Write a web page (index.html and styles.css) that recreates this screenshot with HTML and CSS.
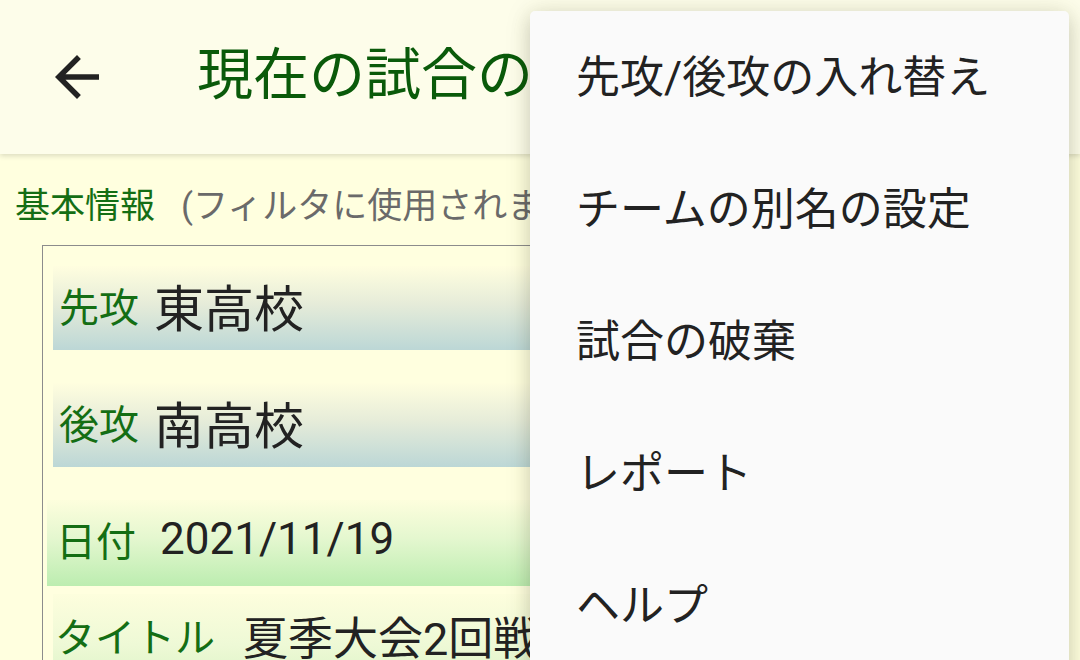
FILE: index.html
```html
<!DOCTYPE html>
<html lang="ja">
<head>
<meta charset="utf-8">
<title>現在の試合の情報</title>
<link rel="stylesheet" href="styles.css">
</head>
<body>
<div class="screen">
  <header class="toolbar">
    <button class="back" aria-label="戻る">
      <svg viewBox="0 0 24 24" width="66" height="66"><path d="M20 11H7.83l5.59-5.59L12 4l-8 8 8 8 1.41-1.41L7.83 13H20v-2z" fill="#222"/></svg>
    </button>
    <h1 class="title">現在の試合の情報</h1>
  </header>
  <main class="content">
    <div class="section-head"><span class="section-title">基本情報</span><span class="section-note">(フィルタに使用されます)</span></div>
    <div class="box">
      <div class="row team first"><span class="label">先攻</span><span class="team-name">東高校</span></div>
      <div class="row team second"><span class="label">後攻</span><span class="team-name">南高校</span></div>
      <div class="row date"><span class="label">日付</span><span class="value">2021/11/19</span></div>
      <div class="row plain"><span class="label">タイトル</span><span class="value cjk">夏季大会2回戦</span></div>
    </div>
  </main>
  <ul class="menu">
    <li>先攻/後攻の入れ替え</li>
    <li>チームの別名の設定</li>
    <li>試合の破棄</li>
    <li>レポート</li>
    <li>ヘルプ</li>
  </ul>
</div>
</body>
</html>
```
FILE: styles.css
```css
html, body {
  margin: 0;
  padding: 0;
}
body {
  width: 1080px;
  height: 660px;
  overflow: hidden;
  background: #ffffdf;
  font-family: Roboto, "Noto Sans CJK JP", sans-serif;
  color: #222;
}
.screen {
  position: relative;
  width: 1080px;
  height: 660px;
  overflow: hidden;
  display: flex;
  flex-direction: column;
}
.toolbar {
  height: 154px;
  flex: none;
  background: #fdfdea;
  display: flex;
  align-items: center;
  box-shadow: 0 2px 5px rgba(0,0,0,0.14);
  position: relative;
  z-index: 1;
}
.back {
  width: 66px;
  height: 66px;
  margin-left: 44px;
  padding: 0;
  border: 0;
  background: none;
  display: flex;
}
.title {
  margin: 0 0 4px 87px;
  font-size: 56px;
  font-weight: 400;
  color: #0a5a0a;
  white-space: nowrap;
  line-height: 1;
}
.content {
  flex: 1;
  padding: 29px 0 0 15px;
}
.section-head {
  font-size: 35px;
  line-height: 48px;
  white-space: nowrap;
}
.section-title {
  color: #146e14;
}
.section-note {
  color: #6a6a6a;
  margin-left: 26px;
}
.box {
  margin: 14px 0 0 27px;
  width: 1000px;
  height: 600px;
  border: 1px solid #8c8c8c;
  border-right: 0;
  border-bottom: 0;
  display: flex;
  flex-direction: column;
}
.row {
  display: flex;
  align-items: center;
  white-space: nowrap;
  box-sizing: border-box;
}
.label {
  color: #146e14;
  font-size: 40px;
}
.team {
  height: 84px;
  margin-left: 10px;
  padding: 0 0 6px 6px;
  background: linear-gradient(to bottom, #fffedf 0%, #e6ecd9 45%, #bcd7d6 100%);
}
.team.first {
  margin-top: 20px;
}
.team.second {
  margin-top: 33px;
}
.team-name {
  font-size: 50px;
  margin-left: 15px;
}
.date {
  height: 86px;
  margin-top: 33px;
  margin-left: 4px;
  padding: 0 0 8px 9px;
  background: linear-gradient(to bottom, #fdfedd 0%, #e4f7cf 45%, #bcedb0 100%);
}
.value {
  font-size: 44px;
  margin-left: 24px;
}
.plain {
  height: 84px;
  margin-top: 8px;
  margin-left: 10px;
  padding: 0 0 2px 2px;
  background: linear-gradient(to bottom, #fdfedd 0%, #eef9d6 60%, #dff5c8 100%);
}
.value.cjk {
  font-size: 45px;
  margin-left: 28px;
}
.menu {
  position: absolute;
  left: 530px;
  top: 11px;
  width: 539px;
  height: 700px;
  margin: 0;
  padding: 0;
  list-style: none;
  background: #fafafa;
  border-radius: 5px;
  box-shadow: 0 6px 20px rgba(0,0,0,0.16), 0 0 28px rgba(80,80,0,0.10);
  z-index: 5;
}
.menu li {
  height: 132px;
  box-sizing: border-box;
  padding: 0 0 7px 46px;
  display: flex;
  align-items: center;
  font-size: 44px;
  color: #222;
  white-space: nowrap;
}
```
